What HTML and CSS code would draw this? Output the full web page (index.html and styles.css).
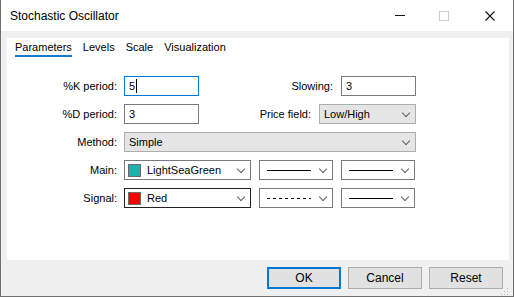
FILE: index.html
```html
<!DOCTYPE html>
<html lang="en">
<head>
    <meta charset="UTF-8">
    <title>Stochastic Oscillator</title>
    <link rel="stylesheet" href="styles.css">
</head>
<body>
    <div class="window">
        <div class="titlebar">
            <span class="title">Stochastic Oscillator</span>
            <div class="controls">
                <span class="ctl ctl-min"></span>
                <span class="ctl ctl-max"></span>
                <span class="ctl ctl-close">
                    <svg width="10" height="10" viewBox="0 0 10 10"><path d="M0.5 0.5 L9.5 9.5 M9.5 0.5 L0.5 9.5" stroke="#111" stroke-width="1.1"/></svg>
                </span>
            </div>
        </div>

        <div class="content">
            <div class="panel">
                <div class="tabs">
                    <span class="tab active">Parameters</span>
                    <span class="tab">Levels</span>
                    <span class="tab">Scale</span>
                    <span class="tab">Visualization</span>
                </div>

                <div class="rows">
                    <div class="row">
                        <label class="lbl">%K period:</label>
                        <div class="field w75 focus">5<span class="caret"></span></div>
                        <label class="lbl2">Slowing:</label>
                        <div class="field w75">3</div>
                    </div>
                    <div class="row">
                        <label class="lbl">%D period:</label>
                        <div class="field w75">3</div>
                        <label class="lbl2">Price field:</label>
                        <div class="combo gray w97">Low/High<span class="chev"></span></div>
                    </div>
                    <div class="row">
                        <label class="lbl">Method:</label>
                        <div class="combo gray wfull">Simple<span class="chev"></span></div>
                    </div>
                    <div class="row">
                        <label class="lbl">Main:</label>
                        <div class="combo wcolor"><span class="swatch sea"></span>LightSeaGreen<span class="chev"></span></div>
                        <div class="combo wline ml8"><span class="line solid"></span><span class="chev"></span></div>
                        <div class="combo wline ml8"><span class="line solid"></span><span class="chev"></span></div>
                    </div>
                    <div class="row">
                        <label class="lbl">Signal:</label>
                        <div class="combo wcolor dark"><span class="swatch red"></span>Red<span class="chev"></span></div>
                        <div class="combo wline ml8"><span class="line dashed"></span><span class="chev"></span></div>
                        <div class="combo wline ml8"><span class="line solid"></span><span class="chev"></span></div>
                    </div>
                </div>
            </div>

            <div class="footer">
                <button class="btn default">OK</button>
                <button class="btn">Cancel</button>
                <button class="btn">Reset</button>
                <span class="grip"></span>
            </div>
        </div>
    </div>
</body>
</html>
```

FILE: styles.css
```css
body {
    margin: 0;
    font-family: "Liberation Sans", Arial, sans-serif;
    font-size: 11px;
    color: #000;
    background: #fff;
}
.window {
    width: 514px;
    height: 297px;
    box-sizing: border-box;
    border: 1px solid #707070;
    border-top: none;
    display: flex;
    flex-direction: column;
}
.titlebar {
    height: 31px;
    background: #fff;
    display: flex;
    align-items: center;
    justify-content: space-between;
}
.title {
    padding-left: 9px;
    font-size: 12px;
    margin-top: 1px;
}
.controls {
    display: flex;
    align-items: center;
    height: 100%;
}
.ctl {
    width: 46px;
    height: 100%;
    display: flex;
    align-items: center;
    justify-content: center;
}
.ctl-min::before {
    content: "";
    width: 10px;
    height: 1px;
    margin-left: 4px;
    background: #111;
}
.ctl-max::before {
    content: "";
    width: 10px;
    height: 10px;
    border: 1px solid #ccc;
    box-sizing: border-box;
}
.content {
    flex: 1;
    background: #f0f0f0;
    padding: 7px 4px 0 6px;
    display: flex;
    flex-direction: column;
}
.panel {
    background: #fff;
    height: 222px;
}
.tabs {
    display: flex;
    padding: 1px 0 0 8px;
}
.tab {
    line-height: 16px;
    border-bottom: 2px solid transparent;
    margin-right: 11px;
}
.tab.active {
    border-bottom-color: #1979ca;
}
.rows {
    width: 409px;
    padding-top: 19px;
    display: flex;
    flex-direction: column;
    gap: 8px;
}
.row {
    display: flex;
    align-items: center;
    height: 20px;
}
.lbl {
    width: 110px;
    margin-right: 7px;
    text-align: right;
}
.lbl2 {
    flex: 1;
    text-align: right;
    margin-right: 8px;
}
.field,
.combo {
    height: 20px;
    box-sizing: border-box;
    border: 1px solid #7a7a7a;
    background: #fff;
    display: flex;
    align-items: center;
    padding-left: 4px;
    position: relative;
}
.field.focus {
    border-color: #0078d7;
}
.caret {
    width: 1px;
    height: 14px;
    background: #000;
    margin-left: 1px;
}
.combo.gray {
    background: #e5e5e5;
    border-color: #adadad;
}
.combo.dark {
    border-color: #222;
}
.w75 { width: 75px; }
.w97 { width: 97px; }
.wfull { width: 292px; }
.wcolor { width: 127px; }
.wline { width: 74px; padding-left: 7px; }
.ml8 { margin-left: 8px; }
.chev {
    position: absolute;
    right: 6px;
    top: 5px;
    width: 5px;
    height: 5px;
    border-right: 1px solid #606060;
    border-bottom: 1px solid #606060;
    transform: rotate(45deg);
}
.swatch {
    width: 11px;
    height: 11px;
    border: 1px solid #6a6a6a;
    margin-right: 6px;
    margin-left: -1px;
}
.sea { background: #20b2aa; }
.red { background: #ff0000; }
.line {
    width: 44px;
    height: 1px;
}
.line.solid { background: #000; }
.line.dashed {
    background: repeating-linear-gradient(to right, #000 0 3px, transparent 3px 6px);
}
.footer {
    flex: 1;
    display: flex;
    justify-content: flex-end;
    align-items: flex-start;
    gap: 7px;
    padding: 7px 6px 0 0;
    position: relative;
}
.btn {
    width: 74px;
    height: 22px;
    box-sizing: border-box;
    background: #e1e1e1;
    border: 1px solid #adadad;
    font-family: inherit;
    font-size: 12px;
    color: #000;
    padding: 0;
}
.btn.default {
    border: 2px solid #0078d7;
}
.grip {
    position: absolute;
    right: 1px;
    bottom: 1px;
    width: 8px;
    height: 8px;
    background: radial-gradient(circle, #bbb 0.8px, transparent 1px) 0 0 / 3px 3px;
    clip-path: polygon(100% 0, 100% 100%, 0 100%);
}
```
